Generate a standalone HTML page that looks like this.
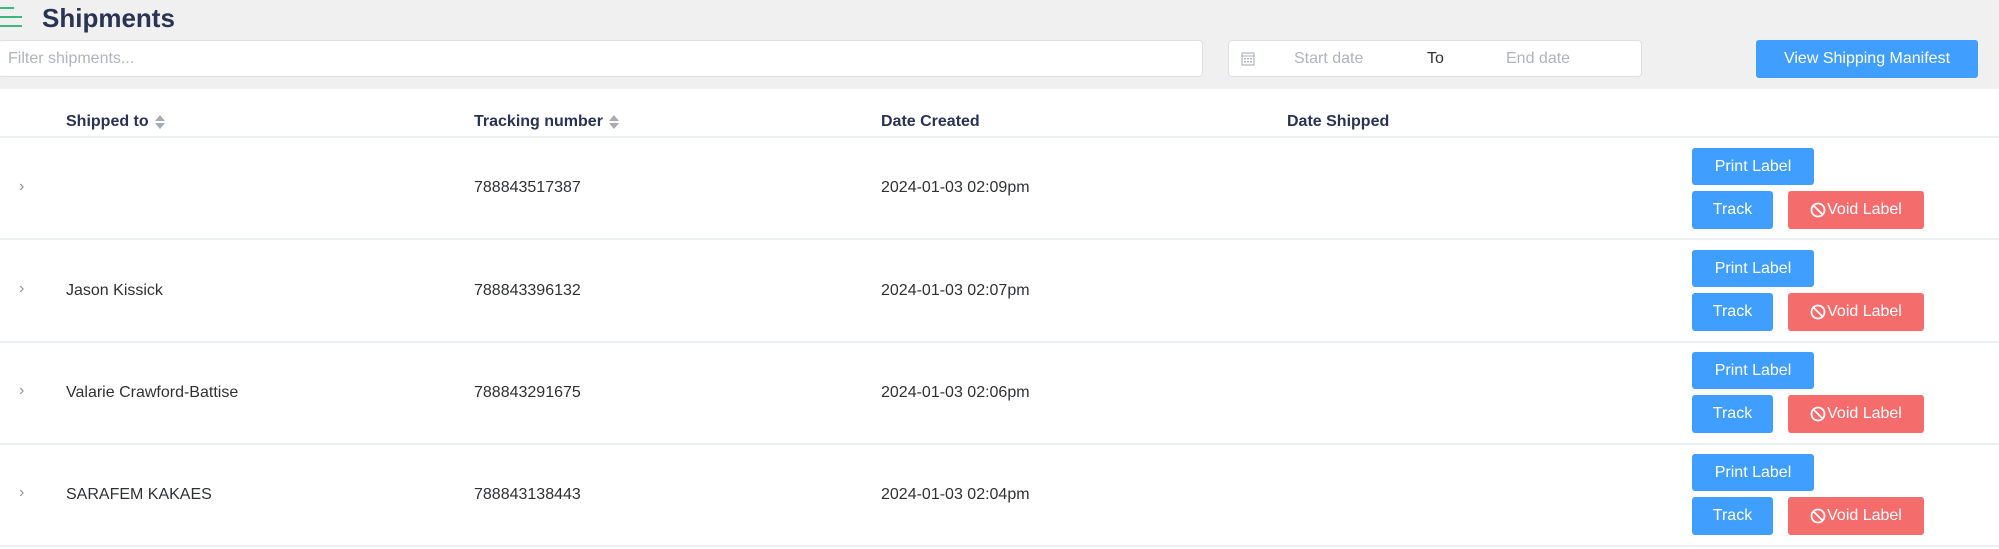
<!DOCTYPE html>
<html><head><meta charset="utf-8"><style>
*{box-sizing:border-box;margin:0;padding:0}
body{width:1999px;height:549px;background:#f0f0f0;font-family:"Liberation Sans",sans-serif;position:relative;overflow:hidden;color:#303133}
.abs{position:absolute}
.title{left:42px;top:1px;font-size:26px;font-weight:bold;color:#2a3352;line-height:34px}
.menu{left:0;top:7px;width:22px}
.menu i{display:block;height:2px;background:#3cba7c;margin-bottom:7px}
.inp{background:#fff;border:1px solid #dcdfe6;border-radius:4px;top:40px;height:37px}
.ph{color:#b0b3b9;font-size:16px;line-height:35px}
.btn{background:#409eff;color:#fff;border-radius:3px;font-size:16px;text-align:center;display:flex;align-items:center;justify-content:center}
.void{background:#f56c6c}
.void svg{margin-right:1px}
.table{left:0;top:89px;width:1999px;height:460px;background:#fff}
.hr{position:absolute;left:0;width:1999px;height:2px;background:#ebeef5}
.th{font-weight:bold;font-size:16px;color:#2a3352;top:113px}
.td{font-size:16px;color:#303133}
.chev{font-size:16px;color:#909399}
.sort{display:inline-block;vertical-align:middle;margin-left:6px;width:10px;height:16px;position:relative}
.sort:before,.sort:after{content:"";position:absolute;left:0;border-left:5px solid transparent;border-right:5px solid transparent}
.sort:before{top:1px;border-bottom:6px solid #a8abb2}
.sort:after{top:9px;border-top:6px solid #a8abb2}
</style></head><body>
<div class="abs menu"><i style="width:14px"></i><i style="width:22px"></i><i style="width:22px"></i></div>
<div class="abs title">Shipments</div>
<div class="abs inp" style="left:-2px;width:1205px"><div class="ph" style="padding-left:9px">Filter shipments...</div></div>
<div class="abs inp" style="left:1228px;width:414px">
<svg class="abs" style="left:12px;top:10px" width="14" height="15" viewBox="0 0 14 15"><rect x="1" y="2" width="12" height="12" fill="none" stroke="#b0b3b9" stroke-width="1.2"/><line x1="1" y1="5" x2="13" y2="5" stroke="#b0b3b9"/><g fill="#b0b3b9"><rect x="3" y="7" width="2" height="1.5"/><rect x="6" y="7" width="2" height="1.5"/><rect x="9" y="7" width="2" height="1.5"/><rect x="3" y="10" width="2" height="1.5"/><rect x="6" y="10" width="2" height="1.5"/><rect x="9" y="10" width="2" height="1.5"/></g></svg>
<div class="abs ph" style="left:65px;top:0">Start date</div>
<div class="abs" style="left:198px;top:0;line-height:35px;font-size:16px;color:#303133">To</div>
<div class="abs ph" style="left:277px;top:0">End date</div>
</div>
<div class="abs btn" style="left:1756px;top:40px;width:222px;height:38px">View Shipping Manifest</div>
<div class="abs table"></div>
<div class="hr" style="top:136px"></div>
<div class="abs th" style="left:66px">Shipped to<span class="sort"></span></div>
<div class="abs th" style="left:474px">Tracking number<span class="sort"></span></div>
<div class="abs th" style="left:881px">Date Created</div>
<div class="abs th" style="left:1287px">Date Shipped</div>

<div class="hr" style="top:238px"></div>
<div class="hr" style="top:341px"></div>
<div class="hr" style="top:443px"></div>
<div class="hr" style="top:545px"></div>

<div class="abs chev" style="left:19px;top:178px">&#x203A;</div>
<div class="abs td" style="left:474px;top:179px">788843517387</div>
<div class="abs td" style="left:881px;top:179px">2024-01-03 02:09pm</div>
<div class="abs btn" style="left:1692px;top:148px;width:122px;height:37px">Print Label</div>
<div class="abs btn" style="left:1692px;top:191px;width:81px;height:38px">Track</div>
<div class="abs btn void" style="left:1788px;top:191px;width:136px;height:38px"><svg width="16" height="16" viewBox="0 0 16 16"><circle cx="8" cy="8" r="6.5" fill="none" stroke="#fff" stroke-width="1.8"/><line x1="3.5" y1="3.5" x2="12.5" y2="12.5" stroke="#fff" stroke-width="1.8"/></svg>Void Label</div>

<div class="abs chev" style="left:19px;top:280px">&#x203A;</div>
<div class="abs td" style="left:66px;top:282px">Jason Kissick</div>
<div class="abs td" style="left:474px;top:282px">788843396132</div>
<div class="abs td" style="left:881px;top:282px">2024-01-03 02:07pm</div>
<div class="abs btn" style="left:1692px;top:250px;width:122px;height:37px">Print Label</div>
<div class="abs btn" style="left:1692px;top:293px;width:81px;height:38px">Track</div>
<div class="abs btn void" style="left:1788px;top:293px;width:136px;height:38px"><svg width="16" height="16" viewBox="0 0 16 16"><circle cx="8" cy="8" r="6.5" fill="none" stroke="#fff" stroke-width="1.8"/><line x1="3.5" y1="3.5" x2="12.5" y2="12.5" stroke="#fff" stroke-width="1.8"/></svg>Void Label</div>

<div class="abs chev" style="left:19px;top:382px">&#x203A;</div>
<div class="abs td" style="left:66px;top:384px">Valarie Crawford-Battise</div>
<div class="abs td" style="left:474px;top:384px">788843291675</div>
<div class="abs td" style="left:881px;top:384px">2024-01-03 02:06pm</div>
<div class="abs btn" style="left:1692px;top:352px;width:122px;height:37px">Print Label</div>
<div class="abs btn" style="left:1692px;top:395px;width:81px;height:38px">Track</div>
<div class="abs btn void" style="left:1788px;top:395px;width:136px;height:38px"><svg width="16" height="16" viewBox="0 0 16 16"><circle cx="8" cy="8" r="6.5" fill="none" stroke="#fff" stroke-width="1.8"/><line x1="3.5" y1="3.5" x2="12.5" y2="12.5" stroke="#fff" stroke-width="1.8"/></svg>Void Label</div>

<div class="abs chev" style="left:19px;top:484px">&#x203A;</div>
<div class="abs td" style="left:66px;top:486px">SARAFEM KAKAES</div>
<div class="abs td" style="left:474px;top:486px">788843138443</div>
<div class="abs td" style="left:881px;top:486px">2024-01-03 02:04pm</div>
<div class="abs btn" style="left:1692px;top:454px;width:122px;height:37px">Print Label</div>
<div class="abs btn" style="left:1692px;top:497px;width:81px;height:38px">Track</div>
<div class="abs btn void" style="left:1788px;top:497px;width:136px;height:38px"><svg width="16" height="16" viewBox="0 0 16 16"><circle cx="8" cy="8" r="6.5" fill="none" stroke="#fff" stroke-width="1.8"/><line x1="3.5" y1="3.5" x2="12.5" y2="12.5" stroke="#fff" stroke-width="1.8"/></svg>Void Label</div>
</body></html>
